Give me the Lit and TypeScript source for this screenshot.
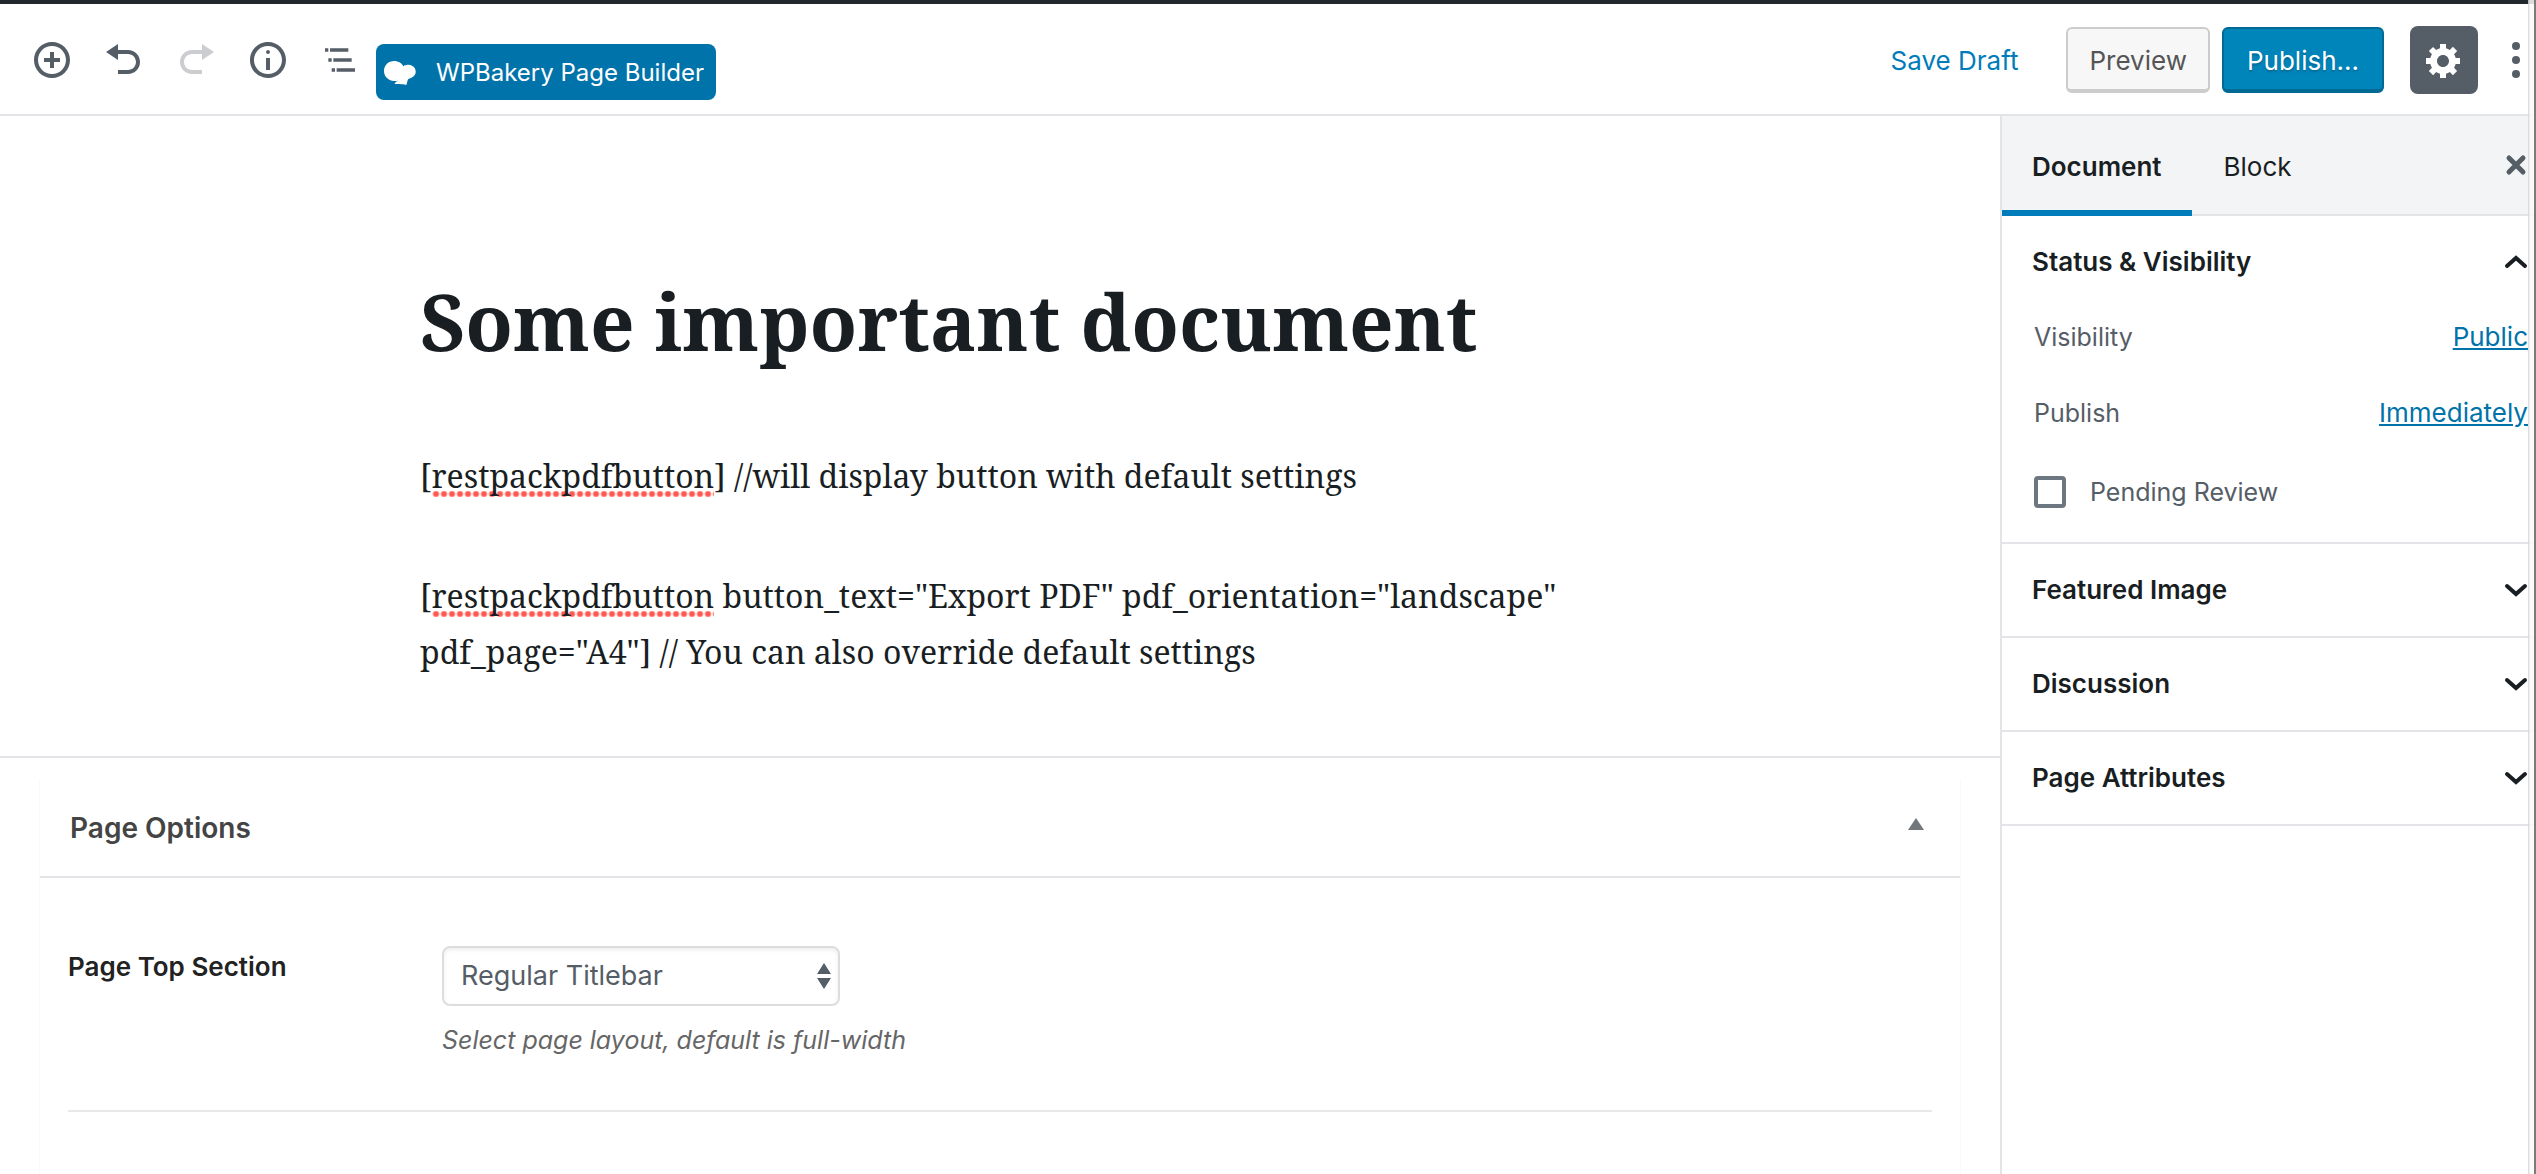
import { LitElement, html, css, svg, type TemplateResult } from "lit";
import { customElement, property, state } from "lit/decorators.js";

const CIRCLE =
  "M10 1c-5 0-9 4-9 9s4 9 9 9 9-4 9-9-4-9-9-9zm0 16c-3.9 0-7-3.1-7-7s3.1-7 7-7 7 3.1 7 7-3.1 7-7 7z";

interface Tool {
  label: string;
  box: number;
  path: string;
  disabled?: boolean;
}

const TOOLS: Tool[] = [
  { label: "Add block", box: 20, path: `${CIRCLE}M11 6H9v3H6v2h3v3h2v-3h3V9h-3V6z` },
  { label: "Undo", box: 20, path: "M12 5H7V2L1 6l6 4V7h5c2.2 0 4 1.8 4 4s-1.8 4-4 4H7v2h5c3.3 0 6-2.7 6-6s-2.7-6-6-6z" },
  { label: "Redo", box: 20, disabled: true, path: "M8 5h5V2l6 4-6 4V7H8c-2.2 0-4 1.8-4 4s1.8 4 4 4h5v2H8c-3.3 0-6-2.7-6-6s2.7-6 6-6z" },
  { label: "Content structure", box: 20, path: `${CIRCLE}M9 15h2V9H9v6zM10 5c-.5 0-1 .5-1 1s.5 1 1 1 1-.5 1-1-.5-1-1-1z` },
  { label: "Block navigation", box: 24, path: "M5 5H3v2h2V5zm3 8h11v-2H8v2zm9-8H6v2h11V5zM7 11H5v2h2v-2zm0 8h2v-2H7v2zm3-2v2h11v-2H10z" },
];

const GEAR =
  "M18 12h-2.18c-.17.7-.44 1.35-.81 1.93l1.54 1.54-2.1 2.1-1.54-1.54c-.58.36-1.23.63-1.91.79V19H8v-2.18c-.68-.16-1.33-.43-1.91-.79l-1.54 1.54-2.12-2.12 1.54-1.54c-.36-.58-.63-1.23-.79-1.91H1V9.03h2.17c.16-.7.44-1.35.8-1.94L2.43 5.55l2.1-2.1 1.54 1.54c.58-.37 1.24-.64 1.93-.81V2h3v2.18c.68.16 1.33.43 1.91.79l1.54-1.54 2.12 2.12-1.54 1.54c.36.59.64 1.24.8 1.94H18V12zm-8.5 1.5c1.66 0 3-1.34 3-3s-1.34-3-3-3-3 1.34-3 3 1.34 3 3 3z";

const base = css`
  *,
  *::before,
  *::after {
    box-sizing: border-box;
  }
  button {
    margin: 0;
    padding: 0;
    border: 0;
    background: none;
    color: inherit;
    font: inherit;
    cursor: pointer;
  }
  svg {
    display: block;
    flex: none;
  }
  h1,
  h2,
  p {
    margin: 0;
  }
`;

@customElement("editor-header")
export class EditorHeader extends LitElement {
  static styles = [
    base,
    css`
      :host {
        display: flex;
        align-items: center;
        height: 116px;
        padding: 2px 2px 0 16px;
        border-top: 4px solid #23282d;
        border-bottom: 2px solid #e2e4e7;
        background: #fff;
        color: #555d66;
      }
      .tools {
        display: flex;
        align-items: center;
        flex: 1;
      }
      .tool {
        display: grid;
        place-items: center;
        width: 72px;
        height: 72px;
      }
      .tool:disabled {
        opacity: 0.3;
      }
      .bakery {
        display: flex;
        align-items: center;
        gap: 20px;
        height: 56px;
        margin-top: 24px;
        padding: 2px 12px 0 8px;
        border-radius: 8px;
        background: #0073aa;
        color: #fff;
        font-size: 24px;
        white-space: nowrap;
      }
      .actions {
        display: flex;
        align-items: center;
        white-space: nowrap;
      }
      .draft {
        padding: 2px 48px 0;
        color: #007cba;
      }
      .push {
        height: 66px;
        margin-right: 12px;
        padding: 4px 21px 0;
        border: 2px solid #ccc;
        border-bottom-width: 4px;
        border-radius: 6px;
        background: #f7f7f7;
        color: #555;
      }
      .push.primary {
        margin-right: 26px;
        padding: 4px 23px 0;
        border-color: #006a95;
        background: #0085ba;
        color: #fff;
        text-shadow: 0 2px 2px #006a95;
      }
      .gear {
        display: grid;
        place-items: center;
        width: 68px;
        height: 68px;
        margin-right: 20px;
        border-radius: 8px;
        background: #555d66;
        color: #fff;
      }
      .more {
        display: grid;
        place-items: center;
        width: 36px;
        height: 68px;
      }
    `,
  ];

  render() {
    return html`
      <div class="tools">
        ${TOOLS.map(
          (t) => html`<button class="tool" aria-label=${t.label} ?disabled=${t.disabled ?? false}>
            <svg width="40" height="40" viewBox="0 0 ${t.box} ${t.box}" fill="currentColor">
              <path fill-rule="evenodd" d=${t.path}></path>
            </svg>
          </button>`
        )}
        <button class="bakery">
          <svg width="32" height="24" viewBox="0 0 96 72" fill="currentColor">
            <path
              d="M30 0C44 0 54 7 58 16C60 14 62 12 66 13C70 11 78 11 84 14C93 18 96 26 95 36C93 45 84 51 73 54C70 58 70 64 67 72C60 69 50 71 32 69C32 65 36 62 42 59C38 60 34 60 30 60C12 59 0 46 0 30C0 12 14 0 30 0z"
            ></path>
          </svg>
          WPBakery Page Builder
        </button>
      </div>
      <div class="actions">
        <button class="draft">Save Draft</button>
        <button class="push">Preview</button>
        <button class="push primary">Publish…</button>
        <button class="gear" aria-label="Settings">
          <svg width="40" height="40" viewBox="0 0 20 20" fill="currentColor"><path d=${GEAR}></path></svg>
        </button>
        <button class="more" aria-label="More tools">
          <svg width="8" height="36" viewBox="0 0 8 36" fill="currentColor">
            ${[4, 18, 32].map((y) => svg`<circle cx="4" cy=${y} r="4"></circle>`)}
          </svg>
        </button>
      </div>
    `;
  }
}

@customElement("side-panel")
export class SidePanel extends LitElement {
  @property() heading = "";
  @property({ type: Boolean }) open = false;

  static styles = [
    base,
    css`
      :host {
        display: block;
        border-bottom: 2px solid #e2e4e7;
      }
      .heading {
        font: inherit;
      }
      .toggle {
        display: flex;
        align-items: center;
        justify-content: space-between;
        width: 100%;
        height: 92px;
        padding: 0 8px 0 30px;
        color: #191e23;
        font-weight: 600;
        text-align: left;
      }
    `,
  ];

  render() {
    return html`
      <h2 class="heading">
        <button class="toggle" aria-expanded=${this.open} @click=${() => (this.open = !this.open)}>
          ${this.heading}
          <svg width="24" height="16" viewBox="0 0 24 16" fill="none" stroke="currentColor" stroke-width="4" stroke-linecap="round">
            <path d=${this.open ? "M3 12l9-8 9 8" : "M3 4l9 8 9-8"}></path>
          </svg>
        </button>
      </h2>
      ${this.open ? html`<slot></slot>` : ""}
    `;
  }
}

@customElement("editor-sidebar")
export class EditorSidebar extends LitElement {
  static styles = [
    base,
    css`
      :host {
        display: block;
        border-left: 2px solid #e2e4e7;
        background: #fff;
        color: #555d66;
      }
      .tabs {
        display: flex;
        height: 100px;
        padding-right: 8px;
        background: #f3f4f5;
        border-bottom: 2px solid #e2e4e7;
        color: #191e23;
      }
      .tab {
        height: 100px;
        padding: 2px 32px 0;
      }
      .tab.active {
        padding: 2px 30px 0;
        box-shadow: inset 0 -6px #007cba;
        font-weight: 600;
      }
      .close {
        margin-left: auto;
        color: #555d66;
      }
      .row {
        display: flex;
        align-items: center;
        justify-content: space-between;
        height: 58px;
        margin-bottom: 18px;
        padding: 0 8px 0 32px;
      }
      .name,
      .check {
        font-size: 25px;
      }
      .link {
        color: #0073aa;
        text-decoration: underline;
      }
      .check {
        display: flex;
        align-items: center;
        gap: 24px;
        height: 64px;
        margin-bottom: 18px;
        padding-left: 32px;
      }
      .box {
        appearance: none;
        width: 32px;
        height: 32px;
        margin: 0;
        border: 4px solid #6c7781;
        border-radius: 4px;
        background: #fff;
      }
      .box:checked {
        background: #11a0d2;
      }
    `,
  ];

  render() {
    return html`
      <div class="tabs">
        <button class="tab active">Document</button>
        <button class="tab">Block</button>
        <button class="close" aria-label="Close settings">
          <svg width="24" height="24" viewBox="0 0 24 24" fill="none" stroke="currentColor" stroke-width="5" stroke-linecap="round">
            <path d="M5 5l14 14M19 5L5 19"></path>
          </svg>
        </button>
      </div>
      <side-panel heading="Status &amp; Visibility" open>
        <div class="row"><span class="name">Visibility</span><button class="link">Public</button></div>
        <div class="row"><span class="name">Publish</span><button class="link">Immediately</button></div>
        <label class="check"><input class="box" type="checkbox" />Pending Review</label>
      </side-panel>
      ${["Featured Image", "Discussion", "Page Attributes"].map((h) => html`<side-panel heading=${h}></side-panel>`)}
    `;
  }
}

@customElement("page-options")
export class PageOptions extends LitElement {
  @state() private open = true;

  static styles = [
    base,
    css`
      :host {
        display: flex;
        flex-direction: column;
        flex: 1;
        padding: 22px 39px 0;
        border-top: 2px solid #e2e4e7;
      }
      .card {
        flex: 1;
        border: solid #fafafa;
        border-width: 0 1px;
      }
      .head {
        display: flex;
        align-items: center;
        justify-content: space-between;
        width: 100%;
        height: 98px;
        padding: 0 36px 0 30px;
        border-bottom: 2px solid #e2e4e7;
        color: #444;
        font-size: 28px;
        font-weight: 600;
      }
      .triangle {
        width: 16px;
        height: 12px;
        margin-bottom: 8px;
        background: #72777c;
        clip-path: polygon(50% 0, 100% 100%, 0 100%);
      }
      .field {
        display: grid;
        grid-template-columns: 374px 1fr;
        margin: 0 28px;
        padding: 68px 0 48px;
        border-bottom: 2px solid #e8e8e8;
      }
      .label {
        color: #222;
        font-weight: 600;
        line-height: 42px;
      }
      .picker {
        position: relative;
        width: 398px;
      }
      .select {
        appearance: none;
        display: block;
        width: 100%;
        height: 60px;
        padding: 0 40px 0 17px;
        border: 2px solid #ddd;
        border-radius: 8px;
        background: #fff;
        box-shadow: inset 0 2px 4px rgba(0, 0, 0, 0.07);
        color: #555d66;
        font: inherit;
        font-size: 27px;
      }
      .arrows {
        position: absolute;
        top: 17px;
        right: 9px;
        pointer-events: none;
      }
      .hint {
        margin: 14px 0 2px;
        color: #666;
        font-size: 25px;
        font-style: italic;
        line-height: 40px;
      }
    `,
  ];

  render() {
    return html`
      <div class="card">
        <button class="head" aria-expanded=${this.open} @click=${() => (this.open = !this.open)}>
          Page Options<span class="triangle"></span>
        </button>
        ${this.open
          ? html`<div class="field">
              <label class="label" for="top-section">Page Top Section</label>
              <div>
                <div class="picker">
                  <select class="select" id="top-section">
                    <option>Regular Titlebar</option>
                  </select>
                  <svg class="arrows" width="14" height="26" viewBox="0 0 14 26" fill="#555d66">
                    <path d="M7 0l7 11H0zM7 26l7-11H0z"></path>
                  </svg>
                </div>
                <p class="hint">Select page layout, default is full-width</p>
              </div>
            </div>`
          : ""}
      </div>
    `;
  }
}

@customElement("app-root")
export class AppRoot extends LitElement {
  static styles = [
    base,
    css`
      :host {
        position: relative;
        display: flex;
        flex-direction: column;
        min-height: 100vh;
        overflow: hidden;
        background: #fff;
        font-family: Inter, Roboto, "Liberation Sans", sans-serif;
        font-size: 26px;
        line-height: 40px;
      }
      .body {
        display: flex;
        flex: 1;
      }
      .main {
        display: flex;
        flex-direction: column;
        flex: 1;
        min-width: 0;
      }
      .side {
        flex: none;
        width: 536px;
      }
      .canvas {
        width: 100%;
        max-width: 1160px;
        margin: 0 auto;
        padding: 150px 0 76px;
        color: #191e23;
        font-family: "Noto Serif", "DejaVu Serif Condensed", "Liberation Serif", serif;
        font-size: 32px;
        line-height: 56px;
      }
      .title {
        margin-bottom: 72px;
        font-size: 78px;
        font-weight: 700;
        line-height: 110px;
      }
      .code + .code {
        margin-top: 64px;
      }
      .typo {
        background: radial-gradient(circle at 4px 3px, #ff5a52 2px, transparent 4px) 0 100% / 8px 6px repeat-x;
      }
      .edge {
        position: absolute;
        inset: 0 0 0 auto;
        width: 8px;
        background: linear-gradient(
          to right,
          rgba(215, 215, 215, 0.85) 0 1px,
          rgba(238, 238, 238, 0.85) 1px 2px,
          rgba(250, 250, 250, 0.85) 2px 6px,
          #7b7b7b 6px
        );
      }
    `,
  ];

  private typo(word: string): TemplateResult {
    return html`<span class="typo">${word}</span>`;
  }

  render() {
    return html`
      <editor-header></editor-header>
      <div class="body">
        <main class="main">
          <article class="canvas">
            <h1 class="title">Some important document</h1>
            <p class="code">[${this.typo("restpackpdfbutton")}] //will display button with default settings</p>
            <p class="code">
              [${this.typo("restpackpdfbutton")} button_text="Export PDF" pdf_orientation="landscape" pdf_page="A4"] // You can also override default settings
            </p>
          </article>
          <page-options></page-options>
        </main>
        <editor-sidebar class="side"></editor-sidebar>
      </div>
      <div class="edge"></div>
    `;
  }
}
